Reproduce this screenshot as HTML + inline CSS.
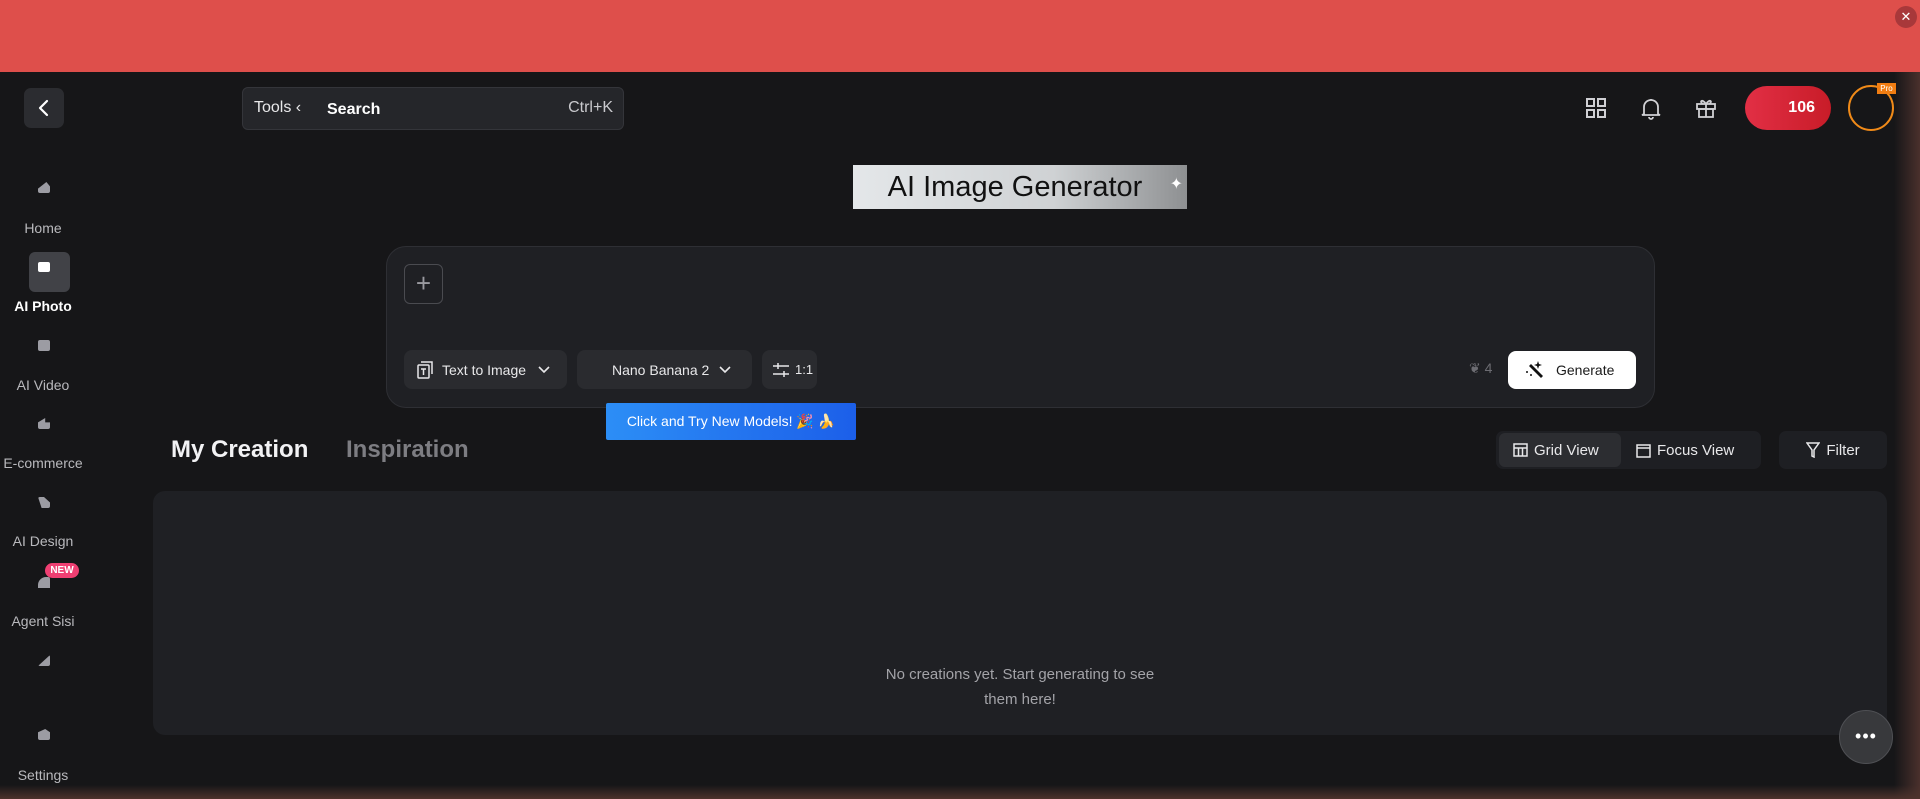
<!DOCTYPE html>
<html><head><meta charset="utf-8"><style>
*{box-sizing:border-box;margin:0;padding:0}
body{width:1920px;height:799px;overflow:hidden;background:#161618;font-family:"Liberation Sans",sans-serif;position:relative;color:#fff}
.abs{position:absolute}
.top{left:0;top:0;width:1920px;height:72px;background:#de4f4b}
.edge-r{right:0;top:72px;width:26px;height:727px;background:linear-gradient(90deg,rgba(22,22,24,0),#4a302c)}
.edge-b{left:0;bottom:0;width:1920px;height:14px;background:linear-gradient(180deg,rgba(22,22,24,0),#4d322c)}
.pill{background:#2a2b2f;border-radius:8px;display:flex;align-items:center;font-size:14px;color:#e8e8ea}
.side{width:86px;text-align:center;font-size:14px;color:#b9b9bd;left:0}
.ico{left:38px;width:12px;height:11px;background:#9c9ca3;border-radius:2px}
</style></head><body>
<div class="abs top"></div>
<div class="abs" style="left:1895px;top:6px;width:22px;height:22px;border-radius:50%;background:#a8383a;color:#fff;font-size:13px;text-align:center;line-height:22px">✕</div>
<div class="abs edge-r"></div>
<div class="abs edge-b"></div>

<div class="abs" style="left:24px;top:88px;width:40px;height:40px;border-radius:7px;background:#2b2c30">
<svg width="40" height="40"><path d="M23 13 L16 20 L23 27" stroke="#fff" stroke-width="2.2" fill="none" stroke-linecap="round" stroke-linejoin="round"/></svg></div>

<div class="abs" style="left:242px;top:87px;width:382px;height:43px;background:#25262a;border:1px solid #34353a;border-radius:6px">
<span class="abs" style="left:11px;top:11px;font-size:16px;color:#e8e8ea">Tools ‹</span>
<span class="abs" style="left:84px;top:13px;font-size:16px;font-weight:bold;color:#fff">Search</span>
<span class="abs" style="right:10px;top:11px;font-size:16px;color:#c9c9cd">Ctrl+K</span></div>

<div class="abs ico" style="top:182px;clip-path:polygon(0 60%,70% 0,100% 40%,100% 100%,0 100%)"></div>
<div class="abs side" style="top:220px">Home</div>
<div class="abs" style="left:29px;top:252px;width:41px;height:40px;border-radius:6px;background:#414247"></div>
<div class="abs" style="left:38px;top:262px;width:12px;height:10px;background:#fff;border-radius:2px"></div>
<div class="abs side" style="top:298px;color:#fff;font-weight:bold">AI Photo</div>
<div class="abs ico" style="top:340px"></div>
<div class="abs side" style="top:377px">AI Video</div>
<div class="abs ico" style="top:418px;clip-path:polygon(0 40%,60% 0,60% 40%,100% 40%,100% 100%,0 100%)"></div>
<div class="abs side" style="top:455px">E-commerce</div>
<div class="abs ico" style="top:497px;clip-path:polygon(0 0,50% 0,100% 50%,100% 100%,30% 100%)"></div>
<div class="abs side" style="top:533px">AI Design</div>
<div class="abs" style="left:45px;top:563px;width:34px;height:15px;border-radius:8px;background:#ef3f72;font-size:10px;font-weight:bold;text-align:center;line-height:15px">NEW</div>
<div class="abs ico" style="top:577px;border-radius:8px 2px 0 0"></div>
<div class="abs side" style="top:613px">Agent Sisi</div>
<div class="abs ico" style="top:655px;clip-path:polygon(100% 0,100% 100%,0 100%)"></div>
<div class="abs ico" style="top:729px;clip-path:polygon(0 30%,60% 0,100% 30%,100% 100%,0 100%)"></div>
<div class="abs side" style="top:767px">Settings</div>

<svg class="abs" style="left:1585px;top:97px" width="22" height="22" fill="none" stroke="#d0d0d4" stroke-width="2"><rect x="2" y="2" width="7" height="7"/><rect x="13" y="2" width="7" height="7"/><rect x="2" y="13" width="7" height="7"/><rect x="13" y="13" width="7" height="7"/></svg>
<svg class="abs" style="left:1639px;top:96px" width="24" height="24" fill="none" stroke="#d0d0d4" stroke-width="1.8"><path d="M5 18 L5 11 A7 7 0 0 1 19 11 L19 18 L21 19 L3 19 Z M12 3 L12 4 M10 21 A2 2 0 0 0 14 21"/></svg>
<svg class="abs" style="left:1694px;top:96px" width="24" height="24" fill="none" stroke="#d0d0d4" stroke-width="1.8"><rect x="3" y="8" width="18" height="5"/><rect x="5" y="13" width="14" height="8"/><path d="M12 8 L12 21 M12 8 C8 2 5 6 9 8 M12 8 C16 2 19 6 15 8"/></svg>
<div class="abs" style="left:1745px;top:86px;width:86px;height:44px;border-radius:22px;background:linear-gradient(90deg,#e22f45,#c81c28);font-size:16px;font-weight:bold;text-align:right;padding-right:16px;line-height:44px">106</div>
<div class="abs" style="left:1848px;top:85px;width:46px;height:46px;border-radius:50%;border:2px solid #f08a18"></div>
<div class="abs" style="left:1877px;top:83px;width:19px;height:11px;background:#f07d12;font-size:8px;color:#fff;text-align:center;line-height:11px">Pro</div>

<div class="abs" style="left:853px;top:165px;width:334px;height:44px;background:linear-gradient(90deg,#e4e7e9,#cfd2d4 60%,#8e9092);color:#111;font-size:29px;text-align:center;line-height:44px;padding-right:10px">AI Image Generator<span style="position:absolute;right:4px;top:-2px;font-size:16px;color:#fff">✦</span></div>

<div class="abs" style="left:386px;top:246px;width:1269px;height:162px;background:#1f2024;border:1px solid #2e2f34;border-radius:20px"></div>
<div class="abs" style="left:404px;top:264px;width:39px;height:40px;border:1px solid #4a4b50;border-radius:6px;color:#9a9aa0;font-size:26px;text-align:center;line-height:36px;font-weight:300">+</div>
<div class="abs pill" style="left:404px;top:350px;width:163px;height:39px;padding-left:12px">
<svg width="18" height="20" fill="none" stroke="#e8e8ea" stroke-width="1.5"><rect x="2" y="5" width="11" height="13" rx="1"/><path d="M5 2 L16 2 L16 14 M5 9 L10 9 M7.5 9 L7.5 15"/></svg><span style="margin-left:8px">Text to Image</span><svg style="margin-left:12px" width="12" height="8" fill="none" stroke="#e8e8ea" stroke-width="1.6"><path d="M1 1 L6 6 L11 1"/></svg></div>
<div class="abs pill" style="left:577px;top:350px;width:175px;height:39px;padding-left:35px">Nano Banana 2<svg style="margin-left:10px" width="12" height="8" fill="none" stroke="#e8e8ea" stroke-width="1.6"><path d="M1 1 L6 6 L11 1"/></svg></div>
<div class="abs pill" style="left:762px;top:350px;width:55px;height:39px;padding-left:10px">
<svg width="18" height="18" fill="none" stroke="#e8e8ea" stroke-width="1.5"><path d="M1 5 L17 5 M6 2 L6 8 M1 13 L17 13 M12 10 L12 16"/></svg><span style="margin-left:5px;font-size:13px">1:1</span></div>
<div class="abs" style="left:1469px;top:360px;font-size:14px;color:#6c6c72">❦ 4</div>
<div class="abs" style="left:1508px;top:351px;width:128px;height:38px;background:#fff;border-radius:8px;color:#1a1a1a;font-size:14px;line-height:38px;padding-left:48px">Generate</div>
<svg class="abs" style="left:1525px;top:360px" width="20" height="20" fill="#111"><path d="M4 6 L16 18 L18 16 L6 4 Z"/><path d="M13 1 L14 4 L17 5 L14 6 L13 9 L12 6 L9 5 L12 4Z"/><circle cx="2" cy="12" r="1"/><circle cx="6" cy="15" r="1"/></svg>

<div class="abs" style="left:606px;top:403px;width:250px;height:37px;background:linear-gradient(90deg,#2c8ef6,#1c5fe9);border-radius:2px;font-size:14px;line-height:37px;text-align:center">Click and Try New Models! 🎉 🍌</div>

<div class="abs" style="left:171px;top:436px;font-size:24px;font-weight:bold;color:#f2f2f4">My Creation</div>
<div class="abs" style="left:346px;top:436px;font-size:24px;font-weight:bold;color:#7d7d82">Inspiration</div>
<div class="abs" style="left:1496px;top:431px;width:265px;height:38px;background:#1e1f23;border-radius:7px"></div>
<div class="abs pill" style="left:1499px;top:433px;width:122px;height:34px;padding-left:14px;font-size:15px;border-radius:6px;background:#2c2d31">
<svg width="15" height="14" fill="none" stroke="#e8e8ea" stroke-width="1.5"><rect x="1" y="1" width="13" height="12"/><path d="M1 5 L14 5 M5.5 5 L5.5 13 M9.5 5 L9.5 13"/></svg><span style="margin-left:6px">Grid View</span></div>
<div class="abs" style="left:1636px;top:442px;display:flex;align-items:center;font-size:15px;color:#e8e8ea">
<svg width="15" height="14" fill="none" stroke="#e8e8ea" stroke-width="1.5"><rect x="1" y="1" width="13" height="12"/><path d="M1 4 L14 4"/></svg><span style="margin-left:6px">Focus View</span></div>
<div class="abs" style="left:1779px;top:431px;width:108px;height:38px;background:#1e1f23;border-radius:7px;display:flex;align-items:center;justify-content:center;font-size:15px;color:#e8e8ea">
<svg width="14" height="16" fill="none" stroke="#e8e8ea" stroke-width="1.5"><path d="M1 1 L13 1 L8 8 L8 15 L6 14 L6 8 Z"/></svg><span style="margin-left:6px">Filter</span></div>

<div class="abs" style="left:153px;top:491px;width:1734px;height:244px;background:#1f2024;border-radius:12px"></div>
<div class="abs" style="left:820px;top:662px;width:400px;text-align:center;font-size:15px;line-height:25px;color:#a3a3a8">No creations yet. Start generating to see<br>them here!</div>
<div class="abs" style="left:1839px;top:710px;width:54px;height:54px;border-radius:50%;background:#38393c;border:1px solid #4f5054;color:#fff;text-align:center;line-height:50px;font-size:18px;letter-spacing:1px">•••</div>
</body></html>
